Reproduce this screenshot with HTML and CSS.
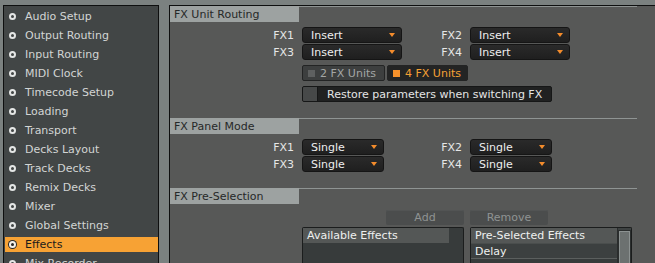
FILE: index.html
```html
<!DOCTYPE html>
<html>
<head>
<meta charset="utf-8">
<link rel="stylesheet" href="styles.css">
</head>
<body>
<div class="app">
  <nav class="sidebar">
    <ul class="nav">
      <li class="nav-item"><span class="dot"></span>Audio Setup</li>
      <li class="nav-item"><span class="dot"></span>Output Routing</li>
      <li class="nav-item"><span class="dot"></span>Input Routing</li>
      <li class="nav-item"><span class="dot"></span>MIDI Clock</li>
      <li class="nav-item"><span class="dot"></span>Timecode Setup</li>
      <li class="nav-item"><span class="dot"></span>Loading</li>
      <li class="nav-item"><span class="dot"></span>Transport</li>
      <li class="nav-item"><span class="dot"></span>Decks Layout</li>
      <li class="nav-item"><span class="dot"></span>Track Decks</li>
      <li class="nav-item"><span class="dot"></span>Remix Decks</li>
      <li class="nav-item"><span class="dot"></span>Mixer</li>
      <li class="nav-item"><span class="dot"></span>Global Settings</li>
      <li class="nav-item active"><span class="dot"></span>Effects</li>
      <li class="nav-item"><span class="dot"></span>Mix Recorder</li>
    </ul>
  </nav>

  <main class="main">
    <section class="sec sec-routing">
      <div class="sec-title">FX Unit Routing</div>
      <div class="fx-grid grid-routing">
        <span class="fx-label">FX1</span>
        <div class="dropdown"><span>Insert</span><i class="tri"></i></div>
        <span class="fx-label">FX2</span>
        <div class="dropdown"><span>Insert</span><i class="tri"></i></div>
        <span class="fx-label">FX3</span>
        <div class="dropdown"><span>Insert</span><i class="tri"></i></div>
        <span class="fx-label">FX4</span>
        <div class="dropdown"><span>Insert</span><i class="tri"></i></div>
      </div>
      <div class="unit-row">
        <div class="unit-btn off"><i class="sq"></i>2 FX Units</div>
        <div class="unit-btn on"><i class="sq"></i>4 FX Units</div>
      </div>
      <div class="restore">
        <span class="check"></span>
        <span class="restore-text">Restore parameters when switching FX</span>
      </div>
    </section>

    <section class="sec sec-panel">
      <div class="sec-title">FX Panel Mode</div>
      <div class="fx-grid grid-panel">
        <span class="fx-label">FX1</span>
        <div class="dropdown"><span>Single</span><i class="tri"></i></div>
        <span class="fx-label">FX2</span>
        <div class="dropdown"><span>Single</span><i class="tri"></i></div>
        <span class="fx-label">FX3</span>
        <div class="dropdown"><span>Single</span><i class="tri"></i></div>
        <span class="fx-label">FX4</span>
        <div class="dropdown"><span>Single</span><i class="tri"></i></div>
      </div>
    </section>

    <section class="sec sec-presel">
      <div class="sec-title">FX Pre-Selection</div>
      <div class="action-row">
        <div class="act-btn">Add</div>
        <div class="act-btn">Remove</div>
      </div>
      <div class="lists">
        <div class="list">
          <div class="list-rows">
            <div class="list-head">Available Effects</div>
          </div>
          <div class="gutter"></div>
        </div>
        <div class="list">
          <div class="list-rows">
            <div class="list-head">Pre-Selected Effects</div>
            <div class="list-row">Delay</div>
          </div>
          <div class="scrollbar"><div class="thumb"></div></div>
        </div>
      </div>
    </section>
  </main>
</div>
</body>
</html>
```

FILE: styles.css
```css
* { box-sizing: border-box; }

html, body {
  margin: 0;
  padding: 0;
  width: 655px;
  height: 263px;
  overflow: hidden;
  background: #7b8180;
  font-family: "DejaVu Sans", "Liberation Sans", sans-serif;
  font-size: 11px;
}

.app {
  display: flex;
  gap: 10px;
  padding: 5px 0 0 3px;
  height: 263px;
}

/* ---------- sidebar ---------- */
.sidebar {
  width: 156px;
  flex: none;
  background: #424646;
  border: 1px solid #0e0f0f;
  border-bottom: none;
  padding: 3px 0 0 1px;
}

.nav {
  list-style: none;
  margin: 0;
  padding: 0;
}

.nav-item {
  display: flex;
  align-items: center;
  height: 15px;
  line-height: 16px;
  padding-top: 1px;
  margin-bottom: 4px;
  color: #d2d5d4;
  white-space: nowrap;
}

.dot {
  width: 7px;
  height: 7px;
  border-radius: 50%;
  border: 2px solid #e4e6e5;
  background: #424646;
  margin: -1px 9px 0 4px;
  flex: none;
}

.nav-item.active {
  background: #f7a234;
  color: #1b1b1b;
}

.nav-item.active .dot {
  border: 2px solid #f4f1ea;
  background: #2a2a2a;
  box-shadow: 0 0 0 1px #2a2a2a;
}

/* ---------- main ---------- */
.main {
  flex: 1;
  background: #575857;
  border-top: 1px solid #0e0f0f;
  border-left: 1px solid #0e0f0f;
  display: flex;
  flex-direction: column;
}

.sec {
  flex: none;
  border-top: 1px solid #8f9493;
  margin-right: 18px;
}

.sec-title {
  margin-top: -1px;
  width: 129px;
  height: 16px;
  line-height: 17px;
  padding-left: 4px;
  background: #9da2a1;
  color: #262828;
}

.sec-routing { height: 112px; }
.sec-panel { height: 70px; }

.fx-grid {
  display: grid;
  column-gap: 8px;
  row-gap: 1px;
  margin-top: 5px;
  grid-auto-rows: 16px;
}

.grid-routing { grid-template-columns: 124px 100px 52px 100px; }
.grid-panel { grid-template-columns: 124px 82px 70px 82px; }

.fx-label {
  text-align: right;
  line-height: 17px;
  color: #e6e7e7;
}

.dropdown {
  display: flex;
  align-items: center;
  justify-content: space-between;
  padding: 0 6px 0 8px;
  background: linear-gradient(#2a2a2a, #1f1f1f);
  border: 1px solid #151515;
  border-radius: 3px;
  color: #eeeeee;
  line-height: 15px;
}

.tri {
  width: 0;
  height: 0;
  border-left: 3.5px solid transparent;
  border-right: 3.5px solid transparent;
  border-top: 4px solid #f48c2c;
}

.unit-row {
  display: flex;
  gap: 2px;
  margin: 5px 0 0 132px;
}

.unit-btn {
  display: flex;
  align-items: center;
  height: 16px;
  line-height: 15px;
  padding-left: 5px;
  border: 1px solid #232424;
  border-radius: 2px;
}

.unit-btn .sq {
  width: 7px;
  height: 7px;
  margin-right: 5px;
}

.unit-btn.off {
  width: 83px;
  background: #3d3f3f;
  color: #a3a6a5;
}
.unit-btn.off .sq { background: #5e6060; }

.unit-btn.on {
  width: 81px;
  background: #232424;
  color: #f5a134;
}
.unit-btn.on .sq { background: #f5912b; }

.restore {
  display: flex;
  width: 250px;
  height: 16px;
  margin: 5px 0 0 132px;
  border: 1px solid #161717;
  border-radius: 2px;
  background: #202121;
  color: #e4e5e5;
  overflow: hidden;
}

.check {
  width: 15px;
  flex: none;
  background: #474949;
  border-right: 1px solid #161717;
}

.restore-text {
  line-height: 15px;
  padding-left: 9px;
  white-space: nowrap;
}

/* ---------- pre-selection ---------- */
.action-row {
  display: flex;
  gap: 6px;
  margin: 6px 0 0 216px;
}

.act-btn {
  width: 78px;
  height: 15px;
  line-height: 16px;
  text-align: center;
  background: #4b4d4d;
  border-radius: 2px;
  color: #8f9393;
  box-shadow: inset 0 1px 0 #525454;
}

.lists {
  display: flex;
  gap: 6px;
  margin: 2px 0 0 132px;
}

.list {
  display: flex;
  width: 162px;
  height: 40px;
  border: 1px solid #1b1d1d;
  border-bottom: none;
  border-radius: 2px 2px 0 0;
  background: #373b3b;
}

.list-rows {
  flex: 1;
}

.list-head {
  height: 15px;
  line-height: 16px;
  padding-left: 4px;
  background: #545756;
  color: #eef0ef;
}

.list-row {
  height: 16px;
  line-height: 15px;
  padding-left: 4px;
  background: #3c4040;
  border-top: 1px solid #4a4e4d;
  border-bottom: 1px solid #5b5f5e;
  color: #eef0ef;
}

.gutter {
  width: 14px;
  flex: none;
}

.scrollbar {
  width: 14px;
  flex: none;
  background: #3e4242;
  border-left: 1px solid #2a2d2d;
  padding: 3px 1px 0 1px;
}

.thumb {
  height: 40px;
  background: #6c7170;
  border: 1px solid #8c9291;
  box-shadow: 0 0 0 1px #2b2e2e;
}
```
